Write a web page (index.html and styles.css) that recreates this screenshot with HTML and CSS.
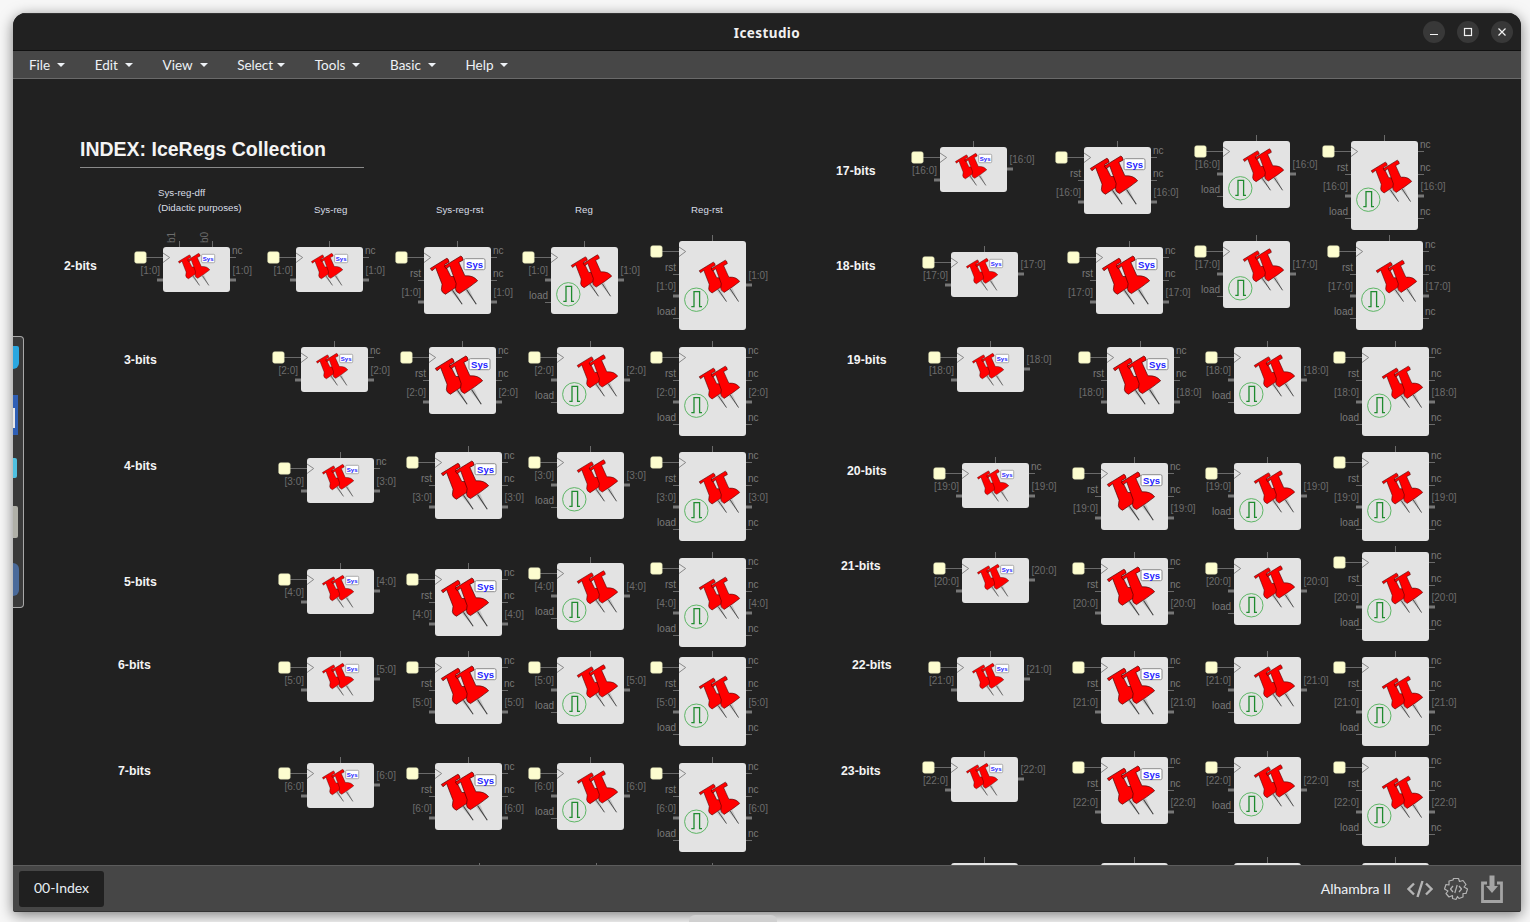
FILE: index.html
```html
<!DOCTYPE html>
<html lang="en">
<head>
  <meta charset="UTF-8" />
  <title>Icestudio</title>
  <link rel="stylesheet" href="styles.css">
</head>
<body>
  <svg class="defs" width="0" height="0">
    <symbol id="pin" viewBox="0 0 146 150">
      <g transform="translate(-118 -75)">
        <polygon class="needle" points="182,184 194,176 216,222" />
        <line class="needle-edge" x1="187" y1="180" x2="216" y2="222" />
        <path class="pin-red" d="M121 115 L170 85 Q175 85 177 96 L164 103 L182 139 Q208 137 220 154 Q198 172 166 192 Q154 186 154 178 L156 162 L137 113 L126 122 Z" />
        <polygon class="needle" points="224,182 236,174 258,222" />
        <line class="needle-edge" x1="229" y1="178" x2="258" y2="222" />
        <path class="pin-red" d="M163 108 L212 78 Q217 79 219 90 L206 97 L224 137 Q250 135 262 152 Q240 170 208 190 Q196 184 196 176 L198 160 L179 108 L168 116 Z" />
      </g>
    </symbol>
  </svg>

  <div class="window">
    <div class="titlebar">
      <span class="app-title">Icestudio</span>
      <div class="win-buttons">
        <button class="win-btn"><svg width="22" height="22"><line x1="7" y1="13.5" x2="15" y2="13.5" /></svg></button>
        <button class="win-btn"><svg width="22" height="22"><rect x="7.5" y="7.5" width="7" height="7" /></svg></button>
        <button class="win-btn"><svg width="22" height="22"><path d="M7.5 7.5 L14.5 14.5 M14.5 7.5 L7.5 14.5" /></svg></button>
      </div>
    </div>

    <div class="menubar">
      <span class="menu-item">File<i class="caret"></i></span>
      <span class="menu-item">Edit<i class="caret"></i></span>
      <span class="menu-item">View<i class="caret"></i></span>
      <span class="menu-item tight">Select<i class="caret"></i></span>
      <span class="menu-item">Tools<i class="caret"></i></span>
      <span class="menu-item">Basic<i class="caret"></i></span>
      <span class="menu-item">Help<i class="caret"></i></span>
    </div>

    <div class="canvas" id="canvas">
      <h1 class="index-title">INDEX: IceRegs Collection</h1>
      <hr class="index-rule">
    </div>

    <div class="bottombar">
      <span class="tab">00-Index</span>
      <div class="board">
        <span class="board-name">Alhambra II</span>
        <svg class="tool-icon" width="26" height="18" viewBox="0 0 26 18">
          <path d="M7 3.5 L1.5 9 L7 14.5 M19 3.5 L24.5 9 L19 14.5 M15.5 1 L10.5 17" />
        </svg>
        <svg class="tool-icon thin" width="26" height="24" viewBox="0 0 26 24">
          <path d="M10.5 1.5 L15.5 1.5 L16.5 4.5 L20 3.5 L23 7.5 L21 10 L24.5 12 L23 16.5 L20 16.5 L20 20 L16 21.5 L14.5 19.5 L13 22.5 L9.5 21.5 L9.5 18.5 L6 20 L3 16.5 L5 14 L1.5 12 L3 7.5 L6 8 L6 4 L10 3 Z" />
          <path d="M10 9 L7.5 12 L10 15 M16 9 L18.5 12 L16 15 M14.2 8 L11.8 16" />
        </svg>
        <svg class="tool-icon wide" width="22" height="28" viewBox="0 0 22 28">
          <path d="M6 8 L1.5 8 L1.5 26.5 L20.5 26.5 L20.5 8 L16 8" />
          <path class="filled" d="M8.5 0.5 L13.5 0.5 L13.5 11 L17 11 L11 18 L5 11 L8.5 11 Z" />
        </svg>
      </div>
    </div>

    <div class="dock">
      <span class="dock-icon files"></span>
      <span class="dock-icon writer"></span>
      <span class="dock-icon term"></span>
      <span class="dock-icon disk"></span>
      <span class="dock-icon globe"></span>
    </div>
  </div>

  <div class="peek"></div>

  <script src="script.js"></script>
</body>
</html>
```

FILE: styles.css
```css
* {
  box-sizing: border-box;
}

body {
  margin: 0;
  height: 922px;
  padding: 13px 9px 10px 13px;
  background: #f7f7f7;
  overflow: hidden;
  font-family: "Liberation Sans", Arial, sans-serif;
  position: relative;
}

.defs {
  position: absolute;
}

.window {
  position: relative;
  height: 899px;
  display: flex;
  flex-direction: column;
  border-radius: 13px 13px 3px 3px;
  overflow: hidden;
  background: #212121;
  box-shadow: 0 3px 14px rgba(0, 0, 0, 0.5);
}

.titlebar {
  flex: 0 0 38px;
  position: relative;
  display: flex;
  align-items: center;
  justify-content: center;
  padding-top: 2px;
  background: #212121;
  border-top: 1px solid #333;
  border-bottom: 1px solid #111;
}

.app-title {
  color: #f0f0f0;
  font: bold 13.5px "Noto Sans", sans-serif;
  letter-spacing: 0.4px;
}

.win-buttons {
  position: absolute;
  right: 8px;
  top: 7px;
  display: flex;
  gap: 12px;
}

.win-btn {
  width: 22px;
  height: 22px;
  padding: 0;
  border: none;
  border-radius: 50%;
  background: #383838;
}

.win-btn svg {
  display: block;
  fill: none;
  stroke: #f2f2f2;
  stroke-width: 1.2;
}

.menubar {
  flex: 0 0 28px;
  display: flex;
  align-items: center;
  padding-left: 1.2px;
  background: #474747;
  border-bottom: 1px solid #6a6a6a;
  color: #eef2f6;
  font: 13.5px Lato, sans-serif;
}

.menu-item {
  display: flex;
  align-items: center;
  padding: 0 14.8px;
}

.caret {
  width: 0;
  height: 0;
  margin-left: 7px;
  border-left: 4px solid transparent;
  border-right: 4px solid transparent;
  border-top: 4px solid #eef2f6;
}

.tight .caret {
  margin-left: 4px;
}

.canvas {
  flex: 1;
  position: relative;
  overflow: hidden;
  background: #212121;
}

.index-title {
  position: absolute;
  left: 67px;
  top: 58px;
  margin: 0;
  color: #f4f4f4;
  font-size: 19.5px;
  font-weight: bold;
  line-height: 24px;
  white-space: nowrap;
}

.index-rule {
  position: absolute;
  left: 67px;
  top: 88px;
  width: 284px;
  margin: 0;
  border: none;
  border-top: 1px solid #8a8a8a;
}

.row-label {
  position: absolute;
  color: #f4f4f4;
  font-size: 12.3px;
  font-weight: bold;
  line-height: 14px;
  white-space: nowrap;
}

.col-label {
  position: absolute;
  color: #d8dde6;
  font-size: 9.7px;
  line-height: 12px;
  white-space: nowrap;
}

/* blocks */
.block {
  position: absolute;
  overflow: visible;
}

.body {
  fill: #e3e3e3;
}

.wire {
  stroke: #6a6a6a;
  stroke-width: 1;
  shape-rendering: crispEdges;
}

.bus {
  fill: #777;
}

.clock {
  fill: #e3e3e3;
  stroke: #888;
  stroke-width: 1;
}

.input-box {
  fill: #fdfdcf;
  stroke: #d8d8b0;
  stroke-width: 0.5;
}

.port {
  fill: #6c6c6c;
  font-size: 10px;
}

.port.name {
  fill: #7a7a7a;
}

.badge {
  fill: #fff;
  stroke: #8c8c8c;
}

.badge-text {
  fill: #2222ff;
  font-weight: bold;
  text-anchor: middle;
}

.pulse-ring {
  fill: none;
  stroke: #5db665;
  stroke-width: 1;
}

.pulse {
  fill: none;
  stroke: #1f8a2f;
  stroke-width: 1.3;
}

.pin-red {
  fill: #ff0000;
  stroke: #4a0000;
  stroke-width: 2;
  stroke-linejoin: round;
}

.needle {
  fill: #c4c4c4;
}

.needle-edge {
  stroke: #3a3a3a;
  stroke-width: 3;
}

.bottombar {
  flex: 0 0 47px;
  display: flex;
  align-items: center;
  justify-content: space-between;
  padding: 0 18px 0 6px;
  background: #464646;
  border-top: 1px solid #5c5c5c;
  border-bottom: 1px solid #333;
}

.tab {
  width: 85px;
  height: 36px;
  display: flex;
  align-items: center;
  justify-content: center;
  padding-bottom: 2px;
  border-radius: 3px;
  background: #202020;
  color: #e8eef4;
  font: 14px Lato, sans-serif;
}

.board {
  display: flex;
  align-items: center;
}

.board-name {
  margin-right: 16px;
  padding-bottom: 1px;
  color: #eef2f6;
  font: 14px Lato, sans-serif;
}

.tool-icon {
  margin-right: 10px;
  fill: none;
  stroke: #b4b4b4;
  stroke-width: 2.4;
}

.tool-icon.thin {
  stroke-width: 1.2;
  stroke-linejoin: round;
  margin-right: 12px;
}

.tool-icon.wide {
  margin-right: 0;
  stroke: #a4a4a4;
  stroke-width: 2.8;
}

.tool-icon .filled {
  fill: #a4a4a4;
  stroke: none;
}

/* launcher dock hanging over the left edge */
.dock {
  position: absolute;
  left: 0;
  top: 323px;
  width: 11px;
  height: 272px;
  display: flex;
  flex-direction: column;
  align-items: flex-start;
  background: #3a3a3a;
  border: 1px solid #a8a8a8;
  border-left: none;
  border-radius: 0 4px 4px 0;
}

.dock-icon {
  display: block;
  position: relative;
}

.files {
  width: 6px;
  height: 23px;
  margin-top: 9px;
  background: #2aa7e0;
  border-radius: 0 2px 6px 0;
}

.writer {
  width: 5px;
  height: 40px;
  margin-top: 26px;
  background: #2f5fb5;
}

.writer::after {
  content: "";
  position: absolute;
  left: 0;
  top: 13px;
  width: 2px;
  height: 20px;
  background: #e8e8e8;
}

.term {
  width: 4px;
  height: 20px;
  margin-top: 23px;
  background: #4fc0e0;
  border-radius: 0 2px 2px 0;
}

.disk {
  width: 5px;
  height: 32px;
  margin-top: 28px;
  background: #b0b0a8;
  border-radius: 0 2px 2px 0;
}

.globe {
  width: 6px;
  height: 33px;
  margin-top: 25px;
  background: #4a6a9a;
  border-radius: 0 16px 16px 0;
}

.peek {
  position: absolute;
  left: 689px;
  top: 915px;
  width: 88px;
  height: 7px;
  background: #d0d0d0;
  border-radius: 6px 6px 0 0;
}
```

FILE: script.js
```js
// canvas origin inside the page
const OX = 13;
const OY = 79;
const NS = "http://www.w3.org/2000/svg";

const HEIGHTS = { sys: 45, sysRst: 67, reg: 67, regRst: 89 };
const PINS = {
  sys: [14.7, 5.7, 32.5],
  sysRst: [5.3, 8, 49],
  reg: [19.3, 7, 42],
  regRst: [19.3, 18.3, 42]
};

function label(x, y, text, end, cls) {
  const anchor = end ? ' text-anchor="end"' : "";
  return `<text class="port ${cls || ""}" x="${x}" y="${y + 3.5}"${anchor}>${text}</text>`;
}

function leftThin(y, text) {
  return `<line class="wire" x1="-6" y1="${y}" x2="0" y2="${y}" />` + label(-3, y - 7, text, true, "name");
}

function leftBus(y, text) {
  return `<rect class="bus" x="-6" y="${y - 1.5}" width="6" height="3" />` + label(-3, y - 9.5, text, true);
}

function rightThin(y, text) {
  return `<line class="wire" x1="67" y1="${y}" x2="73" y2="${y}" />` + label(69, y - 7, text, false, "name");
}

function rightBus(y, text) {
  return `<rect class="bus" x="67" y="${y - 1.5}" width="6" height="3" />` + label(69.5, y - 9.5, text);
}

function ports(type, bits, single) {
  if (type === "sys") {
    const out = single ? rightBus(22, bits) : rightThin(10.5, "nc") + rightBus(33, bits);
    return leftBus(33, bits) + out;
  }
  if (type === "sysRst") {
    return leftThin(33, "rst") + leftBus(55, bits) + rightThin(10.5, "nc") + rightThin(33, "nc") + rightBus(55, bits);
  }
  if (type === "reg") {
    return leftBus(33, bits) + leftThin(55, "load") + rightBus(33, bits);
  }
  const out = single ? rightBus(44, bits) : rightThin(10.5, "nc") + rightThin(33, "nc") + rightBus(55, bits) + rightThin(77.5, "nc");
  return leftThin(33, "rst") + leftBus(55, bits) + leftThin(77.5, "load") + out;
}

function badge(type) {
  if (type === "sys") {
    return `<rect class="badge" x="38.7" y="7.3" width="13" height="8.4" rx="1" stroke-width="0.7" />` +
      `<text class="badge-text" x="45.2" y="13.7" font-size="6">Sys</text>`;
  }
  if (type === "sysRst") {
    return `<rect class="badge" x="40" y="11.7" width="21" height="11" rx="1.5" stroke-width="1" />` +
      `<text class="badge-text" x="50.5" y="20.8" font-size="9.5">Sys</text>`;
  }
  return "";
}

function pulse(type) {
  if (type !== "reg" && type !== "regRst") return "";
  const cy = type === "reg" ? 47.3 : 58.7;
  return `<g transform="translate(17.3 ${cy})">` +
    `<circle class="pulse-ring" r="11.7" />` +
    `<path class="pulse" d="M-5 7 H-2.3 V-8 H3.3 V7 H5.7" /></g>`;
}

function place(svg, x, y, h) {
  svg.setAttribute("class", "block");
  svg.setAttribute("width", 67);
  svg.setAttribute("height", h);
  svg.style.left = (x - OX) + "px";
  svg.style.top = (y - OY) + "px";
  canvas.appendChild(svg);
}

function addBlock(type, x, y, bits, opts) {
  opts = opts || {};
  const h = HEIGHTS[type];
  const p = PINS[type];
  const svg = document.createElementNS(NS, "svg");

  const ticks = opts.ticks || [33.5];
  let html = ticks.map(t => `<line class="wire" x1="${t}" y1="-6" x2="${t}" y2="0" />`).join("");
  html += `<line class="wire" x1="-17" y1="10.5" x2="0" y2="10.5" />`;
  html += `<rect class="input-box" x="-28.3" y="4.7" width="11.5" height="11.5" rx="2" />`;
  html += ports(type, bits, opts.single);
  html += `<rect class="body" width="67" height="${h}" rx="3" />`;
  html += `<path class="clock" d="M0 6 L6.7 10.5 L0 15.5" />`;
  html += `<use href="#pin" x="${p[0]}" y="${p[1]}" width="${p[2]}" height="${p[2] * 150 / 146}" />`;
  html += badge(type) + pulse(type);
  if (opts.tickLabels) {
    opts.tickLabels.forEach((t, i) => {
      html += `<text class="port" transform="translate(${ticks[i] - 4.5} -4) rotate(-90)">${t}</text>`;
    });
  }
  svg.innerHTML = html;
  place(svg, x, y, h);
}

// blocks of the next row, only their top edge shows above the bottom bar
function addStub(x, y) {
  const svg = document.createElementNS(NS, "svg");
  svg.innerHTML = `<line class="wire" x1="33.5" y1="-6" x2="33.5" y2="0" /><rect class="body" width="67" height="45" rx="3" />`;
  place(svg, x, y, 45);
}

function addText(cls, x, y, text) {
  const el = document.createElement("span");
  el.className = cls;
  el.textContent = text;
  el.style.left = (x - OX) + "px";
  el.style.top = (y - OY) + "px";
  canvas.appendChild(el);
}

const canvas = document.getElementById("canvas");

// label x/y, then the four blocks of the row as [x, y]; single = sys block without the nc output
const ROWS = [
  { bits: "[2:0]", name: "3-bits", at: [124, 353], sys: [301, 347], rst: [429, 347], reg: [557, 347], rr: [679, 347] },
  { bits: "[3:0]", name: "4-bits", at: [124, 459], sys: [307, 458], rst: [435, 452], reg: [557, 452], rr: [679, 452] },
  { bits: "[4:0]", name: "5-bits", at: [124, 575], sys: [307, 569], rst: [435, 569], reg: [557, 563], rr: [679, 558], single: true },
  { bits: "[5:0]", name: "6-bits", at: [118, 658], sys: [307, 657], rst: [435, 657], reg: [557, 657], rr: [679, 657], single: true },
  { bits: "[6:0]", name: "7-bits", at: [118, 764], sys: [307, 763], rst: [435, 763], reg: [557, 763], rr: [679, 763], single: true },
  { bits: "[16:0]", name: "17-bits", at: [836, 164], sys: [940, 147], rst: [1084, 147], reg: [1223, 141], rr: [1351, 141], single: true },
  { bits: "[17:0]", name: "18-bits", at: [836, 259], sys: [951, 252], rst: [1096, 247], reg: [1223, 241], rr: [1356, 241], single: true },
  { bits: "[18:0]", name: "19-bits", at: [847, 353], sys: [957, 347], rst: [1107, 347], reg: [1234, 347], rr: [1362, 347], single: true },
  { bits: "[19:0]", name: "20-bits", at: [847, 464], sys: [962, 463], rst: [1101, 463], reg: [1234, 463], rr: [1362, 452] },
  { bits: "[20:0]", name: "21-bits", at: [841, 559], sys: [962, 558], rst: [1101, 558], reg: [1234, 558], rr: [1362, 552], single: true },
  { bits: "[21:0]", name: "22-bits", at: [852, 658], sys: [957, 657], rst: [1101, 657], reg: [1234, 657], rr: [1362, 657], single: true },
  { bits: "[22:0]", name: "23-bits", at: [841, 764], sys: [951, 757], rst: [1101, 757], reg: [1234, 757], rr: [1362, 757], single: true }
];

// first row is the only one with split bit outputs on top
addText("row-label", 64, 259, "2-bits");
addBlock("sys", 163, 247, "[1:0]", { ticks: [16.5, 49.5], tickLabels: ["b1", "b0"] });
addBlock("sys", 296, 247, "[1:0]");
addBlock("sysRst", 424, 247, "[1:0]");
addBlock("reg", 551, 247, "[1:0]");
addBlock("regRst", 679, 241, "[1:0]", { single: true });

ROWS.forEach(r => {
  addText("row-label", r.at[0], r.at[1], r.name);
  addBlock("sys", r.sys[0], r.sys[1], r.bits, { single: r.single });
  addBlock("sysRst", r.rst[0], r.rst[1], r.bits);
  addBlock("reg", r.reg[0], r.reg[1], r.bits);
  addBlock("regRst", r.rr[0], r.rr[1], r.bits);
});

[[445.5, 869], [562.5, 869], [679, 869], [951, 863], [1101, 863], [1234, 863], [1362, 863]].forEach(s => addStub(s[0], s[1]));

addText("col-label", 158, 187, "Sys-reg-dff");
addText("col-label", 158, 202, "(Didactic purposes)");
addText("col-label", 314, 204, "Sys-reg");
addText("col-label", 436, 204, "Sys-reg-rst");
addText("col-label", 575, 204, "Reg");
addText("col-label", 691, 204, "Reg-rst");
```
